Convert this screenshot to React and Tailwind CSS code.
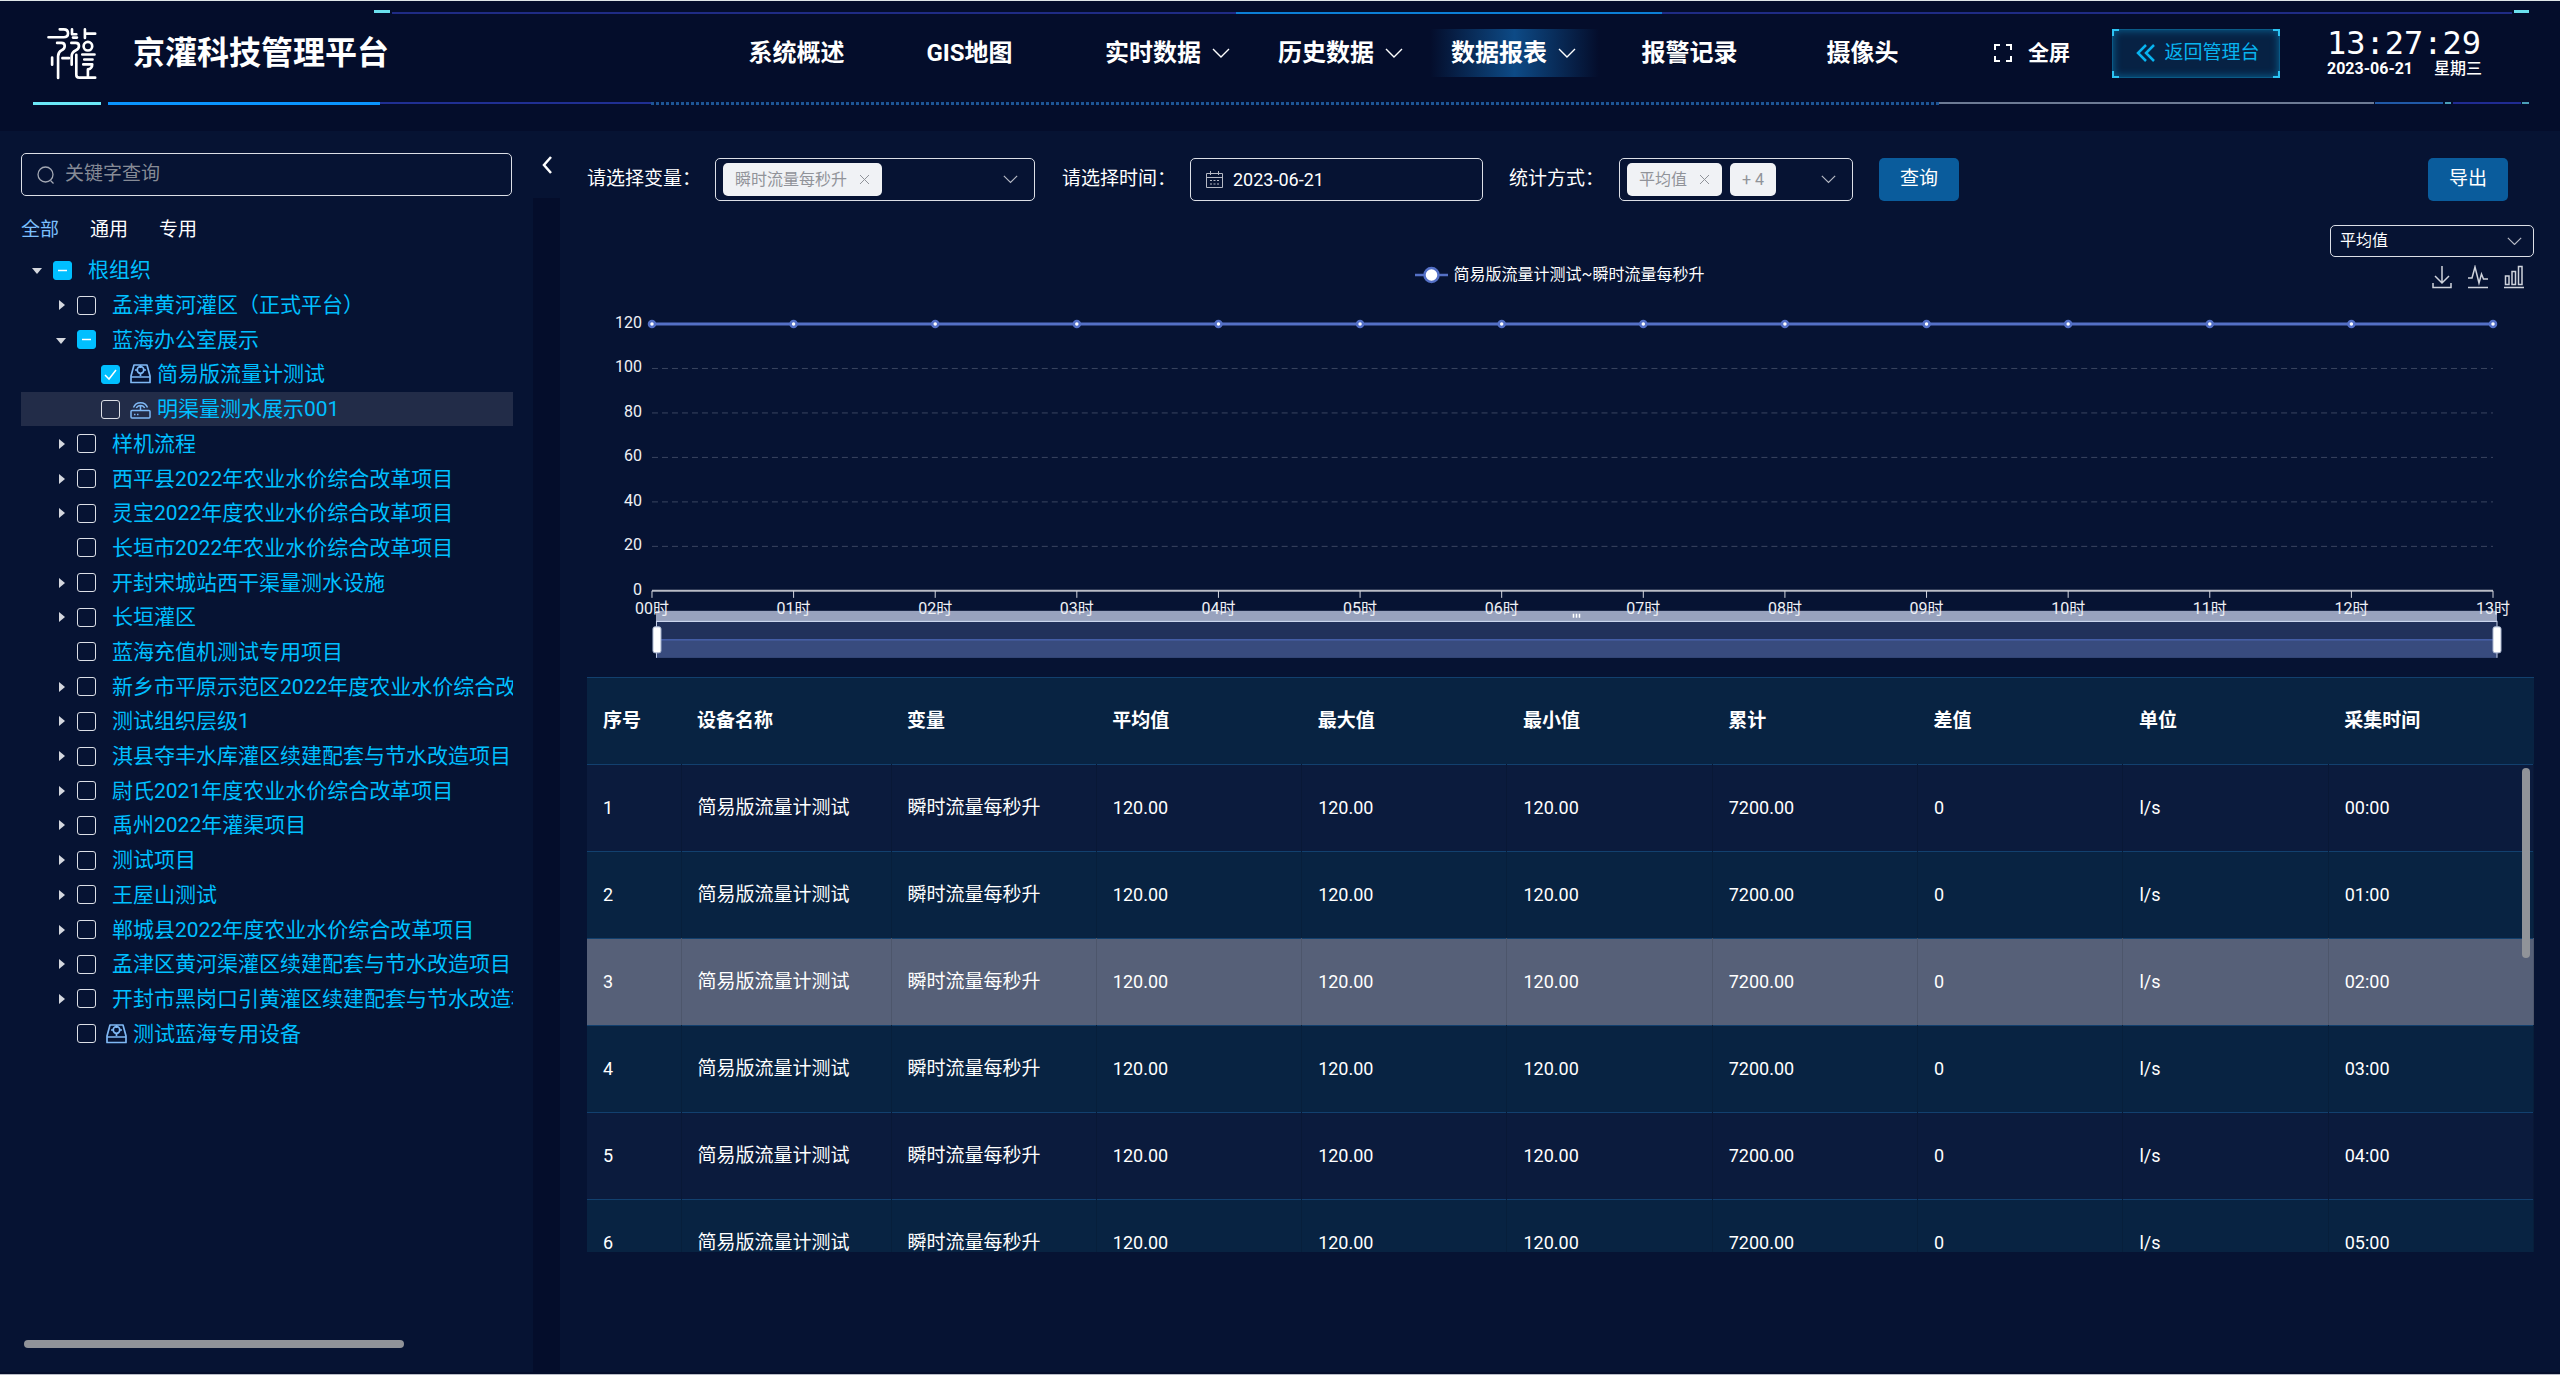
import { useState } from 'react'
import clsx from 'clsx'

const NAV = [
  { label: '系统概述' },
  { label: 'GIS地图' },
  { label: '实时数据', menu: true },
  { label: '历史数据', menu: true },
  { label: '数据报表', menu: true, active: true },
  { label: '报警记录' },
  { label: '摄像头' },
]

const TREE = [
  { label: '根组织', level: 0, open: true, state: 'half' },
  { label: '孟津黄河灌区（正式平台）', level: 1, open: false },
  { label: '蓝海办公室展示', level: 1, open: true, state: 'half' },
  { label: '简易版流量计测试', level: 2, icon: 'meter', state: 'checked' },
  { label: '明渠量测水展示001', level: 2, icon: 'router', hover: true },
  { label: '样机流程', level: 1, open: false },
  { label: '西平县2022年农业水价综合改革项目', level: 1, open: false },
  { label: '灵宝2022年度农业水价综合改革项目', level: 1, open: false },
  { label: '长垣市2022年农业水价综合改革项目', level: 1 },
  { label: '开封宋城站西干渠量测水设施', level: 1, open: false },
  { label: '长垣灌区', level: 1, open: false },
  { label: '蓝海充值机测试专用项目', level: 1 },
  { label: '新乡市平原示范区2022年度农业水价综合改革项目', level: 1, open: false },
  { label: '测试组织层级1', level: 1, open: false },
  { label: '淇县夺丰水库灌区续建配套与节水改造项目', level: 1, open: false },
  { label: '尉氏2021年度农业水价综合改革项目', level: 1, open: false },
  { label: '禹州2022年灌渠项目', level: 1, open: false },
  { label: '测试项目', level: 1, open: false },
  { label: '王屋山测试', level: 1, open: false },
  { label: '郸城县2022年度农业水价综合改革项目', level: 1, open: false },
  { label: '孟津区黄河渠灌区续建配套与节水改造项目', level: 1, open: false },
  { label: '开封市黑岗口引黄灌区续建配套与节水改造项目', level: 1, open: false },
  { label: '测试蓝海专用设备', level: 1, icon: 'meter' },
]

const INDENT = ['pl-0', 'pl-6', 'pl-12']

const COLUMNS = ['序号', '设备名称', '变量', '平均值', '最大值', '最小值', '累计', '差值', '单位', '采集时间']

const ROWS = ['00:00', '01:00', '02:00', '03:00', '04:00', '05:00'].map((time, i) => [
  i + 1, '简易版流量计测试', '瞬时流量每秒升', '120.00', '120.00', '120.00', '7200.00', '0', 'l/s', time,
])

const HOURS = Array.from({ length: 14 }, (_, i) => `${String(i).padStart(2, '0')}时`)

function Chevron({ className }) {
  return (
    <svg viewBox="0 0 18 10" fill="none" stroke="currentColor" strokeWidth="1.4" className={className}>
      <path d="M1 1l8 8 8-8" />
    </svg>
  )
}

function Close() {
  return (
    <svg viewBox="0 0 11 11" fill="none" stroke="currentColor" className="w-[11px]">
      <path d="M1 1l9 9M10 1l-9 9" />
    </svg>
  )
}

function Logo() {
  return (
    <svg viewBox="33 20 150 160" fill="none" stroke="white" strokeWidth="8" strokeLinecap="round" strokeLinejoin="round" className="h-[53px] w-[50px]">
      <path d="M37 51h46q13 0 13-12t-13-12h-12" />
      <path d="M108 27v15h13M111 52h12M147 27v26M147 40h31" />
      <path d="M63 68h13q10 0 10 9t-9 13q-11 6-11 18v66M48 112v22M79 114h20" />
      <path d="M106 68h13q10 0 10 9t-9 13q-13 6-13 18v26M121 104v60q0 9 9 9h48" />
      <circle cx="156" cy="78" r="13" />
      <path d="M139 103h37M145 118h25M142 133h27q0 12-13 15v24" />
    </svg>
  )
}

function MeterIcon() {
  return (
    <svg viewBox="0 0 21 20" fill="none" stroke="currentColor" strokeWidth="1.7" strokeLinejoin="round" className="h-5 w-[21px]">
      <path d="M4 1h13l3 11v6.5H1V12zM1.5 13h18" />
      <circle cx="10.5" cy="6" r="3.3" />
      <path d="M10.5 1v3M10.5 9.5V12M7 6H5M14 6h2" />
    </svg>
  )
}

function RouterIcon() {
  return (
    <svg viewBox="0 0 21 20" fill="none" stroke="currentColor" strokeWidth="1.5" strokeLinejoin="round" className="h-5 w-[21px]">
      <rect x="1" y="11.5" width="19" height="7.5" rx="1" />
      <path d="M4 15.5h1.500M7 15.5h1.500M3.5 8.500a7.500 7.500 0 0 1 14 0M6.300 9a4.700 4.700 0 0 1 8.400 0M10.5 7v4.500" />
    </svg>
  )
}

function TopRule() {
  return (
    <div className="flex h-[5px] items-center gap-[2px] pl-[374px] pr-[31px]">
      <i className="h-[3px] w-4 self-start bg-[#6be0ee]" />
      <div className="flex h-[2px] flex-1">
        <i className="flex-[845] bg-[#1f2b85]" />
        <i className="flex-[426] bg-[#0c7fd6]" />
        <i className="flex-[851] bg-[#1f2b85]" />
      </div>
      <i className="h-[3px] w-[15px] self-start bg-[#6be0ee]" />
    </div>
  )
}

function BottomRule() {
  return (
    <div className="mt-[7px] flex h-[3px] pl-[33px] pr-[31px]">
      <i className="w-[68px] bg-[#6be7f7]" />
      <i className="ml-[7px] w-[272px] bg-[#0a94ff]" />
      <i className="h-[2px] w-[271px] bg-[#202f93]" />
      <i className="flex-1 bg-[repeating-linear-gradient(90deg,#1d5596_0_3px,transparent_3px_5px)]" />
      <i className="h-[2px] w-[435px] bg-[#6d7a94]" />
      <i className="ml-px h-[2px] w-[68px] bg-[#2059a8]" />
      <i className="ml-[2px] h-[2px] w-[6px] bg-[#4a9fb8]" />
      <i className="ml-[2px] h-[2px] w-[68px] bg-[#202b93]" />
      <i className="ml-px h-[2px] w-[7px] bg-[#4a9fb8]" />
    </div>
  )
}

function Header() {
  return (
    <header className="border-t border-[#dfe6e8] bg-[#040d2b] pt-[9px] pb-[26px]">
      <TopRule />
      <div className="flex h-20 items-center pb-1 pl-[47px] pr-[78px]">
        <Logo />
        <h1 className="ml-9 text-[32px] leading-10 font-bold">京灌科技管理平台</h1>

        <nav className="ml-auto mr-[45px] flex items-center text-2xl leading-8 font-bold">
          {NAV.map(({ label, menu, active }, i) => (
            <a
              key={label}
              href="#"
              className={clsx(
                'flex h-12 items-center whitespace-nowrap',
                menu ? 'mr-1 w-[169px] gap-[11px] pl-[21px]' : 'w-[173px] justify-center',
                i === 1 && 'mr-7',
                active && 'bg-linear-to-r from-transparent via-[#0d4a86] to-transparent',
              )}
            >
              {label}
              {menu && <Chevron className="w-[18px]" />}
            </a>
          ))}
        </nav>

        <button className="flex items-center gap-4 text-[21px] leading-8 font-bold">
          <svg viewBox="0 0 18 18" fill="none" stroke="currentColor" strokeWidth="2" className="w-[18px]">
            <path d="M1 6V1h5M12 1h5v5M17 12v5h-5M6 17H1v-5" />
          </svg>
          全屏
        </button>

        <button className="relative ml-[42px] flex h-[49px] w-[168px] items-center justify-center gap-2 border border-[#0a5a86] bg-[#072244] pl-1 text-[19px] text-[#08b4f0] shadow-[inset_0_0_8px_#0a6a9c]">
          <svg viewBox="0 0 168 49" fill="none" stroke="#2cc4f4" strokeWidth="2" className="absolute -inset-px">
            <path d="M1 7V1h6M161 1h6v6M167 42v6h-6M7 48H1v-6" />
          </svg>
          <svg viewBox="0 0 20 18" fill="none" stroke="currentColor" strokeWidth="2.5" className="w-5">
            <path d="M10 1L2 9l8 8M18 1l-8 8 8 8" />
          </svg>
          返回管理台
        </button>

        <div className="ml-[47px] w-[155px]">
          <div className="font-['DejaVu_Sans_Mono',monospace] text-[32px] leading-8">13:27:29</div>
          <div className="flex justify-between text-base leading-5">
            <span className="font-bold">2023-06-21</span>
            <span className="font-medium">星期三</span>
          </div>
        </div>
      </div>
      <BottomRule />
    </header>
  )
}

function TreeCheckbox({ label, state }) {
  return (
    <span className="relative flex shrink-0">
      <input
        type="checkbox"
        aria-label={label}
        defaultChecked={state === 'checked'}
        className={clsx(
          'h-[19px] w-[19px] appearance-none rounded-[3px] border',
          state ? 'border-[#00bfff] bg-[#00bfff]' : 'border-[#dcdfe6]',
        )}
      />
      {state && (
        <svg viewBox="0 0 19 19" fill="none" stroke="white" strokeWidth="1.5" className="pointer-events-none absolute inset-0">
          <path d={state === 'half' ? 'M5 9.500h9' : 'M4 10l4 4 7-9'} />
        </svg>
      )}
    </span>
  )
}

function TreeNode({ label, level, open, state, icon, hover }) {
  return (
    <li className={clsx('flex items-center overflow-hidden whitespace-nowrap', INDENT[level], hover && 'bg-[#222c48]')}>
      <span className="flex w-8 shrink-0 justify-center text-[#d4d7de]">
        {open !== undefined && (
          <svg viewBox="0 0 10 10" fill="currentColor" className={clsx('w-[10px]', open && 'rotate-90')}>
            <path d="M3 0l6 5-6 5z" />
          </svg>
        )}
      </span>
      <TreeCheckbox label={label} state={state} />
      {icon ? (
        <span className="mr-[6px] ml-[10px] shrink-0 text-[#7fb8f5]">
          {icon === 'meter' ? <MeterIcon /> : <RouterIcon />}
        </span>
      ) : (
        <span className="w-4 shrink-0" />
      )}
      <span className="leading-8">{label}</span>
    </li>
  )
}

function Sidebar() {
  const [tab, setTab] = useState('全部')

  return (
    <aside className="flex w-[533px] shrink-0 flex-col bg-[#061333] pl-[21px] pt-[22px]">
      <label className="mr-[21px] flex h-[43px] items-center gap-[10px] rounded-[5px] border border-[#dcdfe6] px-[15px] text-[#a3a8b3]">
        <svg viewBox="0 0 18 18" fill="none" stroke="currentColor" strokeWidth="1.3" className="w-[18px]">
          <circle cx="8.5" cy="8.5" r="7.5" />
          <path d="M13.5 14.5l3 3" />
        </svg>
        <input placeholder="关键字查询" aria-label="关键字查询" className="flex-1 bg-transparent text-[19px] outline-none placeholder:text-[#868b96]" />
      </label>

      <div className="mt-[18px] flex gap-[31px] text-[19px] leading-8">
        {['全部', '通用', '专用'].map((name) => (
          <button key={name} onClick={() => setTab(name)} className={tab === name ? 'text-[#7cc0ff]' : ''}>
            {name}
          </button>
        ))}
      </div>

      <ul className="mt-[7px] mr-5 grid h-[798px] auto-rows-fr text-[21px] text-[#00bfff]">
        {TREE.map((node) => (
          <TreeNode key={node.label} {...node} />
        ))}
      </ul>

      <div className="mt-auto mb-6 ml-[3px] h-2 w-[380px] rounded-full bg-[#909399]" />
    </aside>
  )
}

function Tag({ children, closable }) {
  return (
    <span className="flex h-[33px] items-center gap-3 rounded-[5px] bg-[#f0f2f5] px-3 text-base text-[#909399]">
      {children}
      {closable && (
        <button aria-label={`移除${children}`}>
          <Close />
        </button>
      )}
    </span>
  )
}

function Toolbar() {
  return (
    <div className="flex items-center text-[19px]">
      <span className="w-[128px]">请选择变量：</span>
      <div className="flex h-[43px] w-[320px] items-center rounded-[5px] border border-[#dcdfe6] pl-[7px] pr-4">
        <Tag closable>瞬时流量每秒升</Tag>
        <button aria-label="请选择变量" className="ml-auto text-[#b5b9c4]">
          <Chevron className="w-[15px]" />
        </button>
      </div>

      <label htmlFor="date" className="ml-[27px] w-[128px]">请选择时间：</label>
      <div className="flex h-[43px] w-[293px] items-center gap-[10px] rounded-[5px] border border-[#dcdfe6] px-[15px]">
        <svg viewBox="0 0 17 17" fill="none" stroke="#b5b9c4" className="w-[17px]">
          <path d="M.5 2.5h16v14H.5zM.5 6.500h16M4.500 0v4M12.500 0v4" />
          <path d="M4 9.500h2M7.500 9.500h2M11 9.500h2M4 13h2M7.500 13h2M11 13h2" />
        </svg>
        <input id="date" defaultValue="2023-06-21" className="w-40 bg-transparent text-lg outline-none" />
      </div>

      <span className="ml-[26px] w-[110px]">统计方式：</span>
      <div className="flex h-[43px] w-[234px] items-center gap-2 rounded-[5px] border border-[#dcdfe6] pl-[7px] pr-4">
        <Tag closable>平均值</Tag>
        <Tag>+ 4</Tag>
        <button aria-label="统计方式" className="ml-auto text-[#b5b9c4]">
          <Chevron className="w-[15px]" />
        </button>
      </div>

      <button className="ml-[26px] h-[43px] w-20 rounded-[5px] bg-[#0a5c9c]">查询</button>
      <button className="mr-[26px] ml-auto h-[43px] w-20 rounded-[5px] bg-[#0a5c9c]">导出</button>
    </div>
  )
}

function ChartTools() {
  return (
    <div className="flex gap-4 text-[#cfd3dc]">
      <button aria-label="保存为图片">
        <svg viewBox="0 0 20 24" fill="none" stroke="currentColor" strokeWidth="1.5" className="h-6 w-5">
          <path d="M10 1v16M3 11l7 7 7-7M1 18v4.500h18V18" />
        </svg>
      </button>
      <button aria-label="切换为折线图">
        <svg viewBox="0 0 20 24" fill="none" stroke="currentColor" strokeWidth="1.5" className="h-6 w-5">
          <path d="M0 13h4l3-11 4 16 2.500-9 2 5H20M0 22.500h20" />
        </svg>
      </button>
      <button aria-label="切换为柱状图">
        <svg viewBox="0 0 20 24" fill="none" stroke="currentColor" strokeWidth="1.5" className="h-6 w-5">
          <path d="M1.5 11h3.500v8.500H1.500zM8 6.500h3.500v13H8zM14.500 1.500H18v18h-3.500zM0 22.500h20" />
        </svg>
      </button>
    </div>
  )
}

function LineChart() {
  const left = 65
  const right = 1907
  const step = (right - left) / 13
  const xs = HOURS.map((_, i) => left + i * step)

  return (
    <svg viewBox="0 0 1948 358" className="block w-full text-base">
      {/* axes */}
      {[120, 100, 80, 60, 40, 20, 0].map((v, i) => {
        const y = 23 + i * 44.5
        return (
          <g key={v}>
            {v > 0 && v < 120 && (
              <line x1={left} x2={right} y1={y} y2={y} stroke="#3a4560" strokeDasharray="6 4" />
            )}
            <text x="55" y={y + 4} textAnchor="end" fill="#eef0f5">{v}</text>
          </g>
        )
      })}
      <path d={`M${left} 290H${right}`} stroke="#b9bcc6" strokeWidth="2" />
      {xs.map((x) => (
        <line key={x} x1={x} x2={x} y1="290" y2="297" stroke="#d5d8e0" />
      ))}

      {/* series */}
      <line x1={left} x2={right} y1="23" y2="23" stroke="#5470c6" strokeWidth="3" />
      {xs.map((x) => (
        <circle key={x} cx={x} cy="23" r="3" fill="white" stroke="#5470c6" strokeWidth="2.5" />
      ))}

      {/* zoom slider */}
      <rect x="69" y="310" width="1842" height="10" fill="#98a2bd" />
      <rect x="69" y="320" width="1842" height="37" fill="#21315b" />
      <rect x="69" y="339" width="1842" height="18" fill="#384b7e" />
      <path d="M69 320.500H1911" stroke="#ccd6ee" strokeWidth="1.5" />
      <path d="M69 339H1911" stroke="#5470c6" />
      <path d="M69.500 320V357M1911 320V357" stroke="#ccd6ee" />
      <path d="M987 313v4M990 313v4M993 313v4" stroke="white" strokeWidth="1.5" />
      <rect x="66" y="326" width="8" height="26" rx="2" fill="white" stroke="#acb8d1" />
      <rect x="1907" y="326" width="8" height="26" rx="2" fill="white" stroke="#acb8d1" />

      {HOURS.map((h, i) => (
        <text key={h} x={xs[i]} y="313" textAnchor="middle" fill="#eef0f5">{h}</text>
      ))}
    </svg>
  )
}

function DataTable() {
  return (
    <div className="relative h-[575px] overflow-hidden">
      <table className="w-full table-fixed text-left text-[19px]">
        <colgroup>
          <col className="w-[94px]" />
          <col className="w-[210px]" />
        </colgroup>
        <thead className="bg-[#082342]">
          <tr className="h-[87px] border-y border-[#12406e]">
            {COLUMNS.map((name) => (
              <th key={name} className="px-4 font-bold">{name}</th>
            ))}
          </tr>
        </thead>
        <tbody>
          {ROWS.map((row, i) => (
            <tr
              key={row[0]}
              className={clsx(
                'h-[87px] border-b border-[#12406e]',
                i === 2 ? 'bg-[#566078]' : i % 2 ? 'bg-[#082342]' : 'bg-[#0b1b3d]',
              )}
            >
              {row.map((cell, j) => (
                <td key={COLUMNS[j]} className={clsx('border-r border-black/10 px-4', j !== 1 && j !== 2 && 'text-lg')}>
                  {cell}
                </td>
              ))}
            </tr>
          ))}
        </tbody>
      </table>
      <div className="absolute top-[91px] right-1 h-[190px] w-2 rounded-full bg-[#909399]" />
    </div>
  )
}

export default function App() {
  return (
    <div className="flex min-h-screen flex-col border-b border-[#b9bcc6] bg-[#040d2b] font-[Roboto,'Noto_Sans_CJK_SC',sans-serif] text-white">
      <Header />
      <div className="flex flex-1 pb-[2px]">
        <Sidebar />
        <div className="w-[27px] shrink-0">
          <button aria-label="收起" className="flex h-[67px] w-full items-center justify-center bg-[#061333]">
            <svg viewBox="0 0 10 18" fill="none" stroke="currentColor" strokeWidth="2.5" className="w-[10px]">
              <path d="M9 1L2 9l7 8" />
            </svg>
          </button>
        </div>
        <main className="min-w-0 flex-1 bg-[#061333] pt-[27px] pr-[26px] pl-[27px]">
          <Toolbar />
          <div className="mt-6 flex justify-end">
            <select aria-label="统计值" className="h-8 w-[204px] appearance-none rounded-[5px] border border-[#dcdfe6] bg-transparent pl-[9px] text-base">
              <option>平均值</option>
            </select>
            <Chevron className="pointer-events-none -ml-[27px] mr-3 w-[15px] self-center text-[#b5b9c4]" />
          </div>
          <div className="mt-2 grid grid-cols-[1fr_auto_1fr] items-start pr-[10px]">
            <span />
            <div className="flex items-center gap-[6px] pl-2 text-base leading-5">
              <svg viewBox="0 0 33 18" className="w-[33px]">
                <path d="M0 9h33" stroke="#5470c6" strokeWidth="2.5" />
                <circle cx="16.5" cy="9" r="7" fill="white" stroke="#5470c6" strokeWidth="2.5" />
              </svg>
              简易版流量计测试~瞬时流量每秒升
            </div>
            <div className="flex justify-end">
              <ChartTools />
            </div>
          </div>
          <div className="mt-3 mb-[18px]">
            <LineChart />
          </div>
          <DataTable />
        </main>
      </div>
    </div>
  )
}
